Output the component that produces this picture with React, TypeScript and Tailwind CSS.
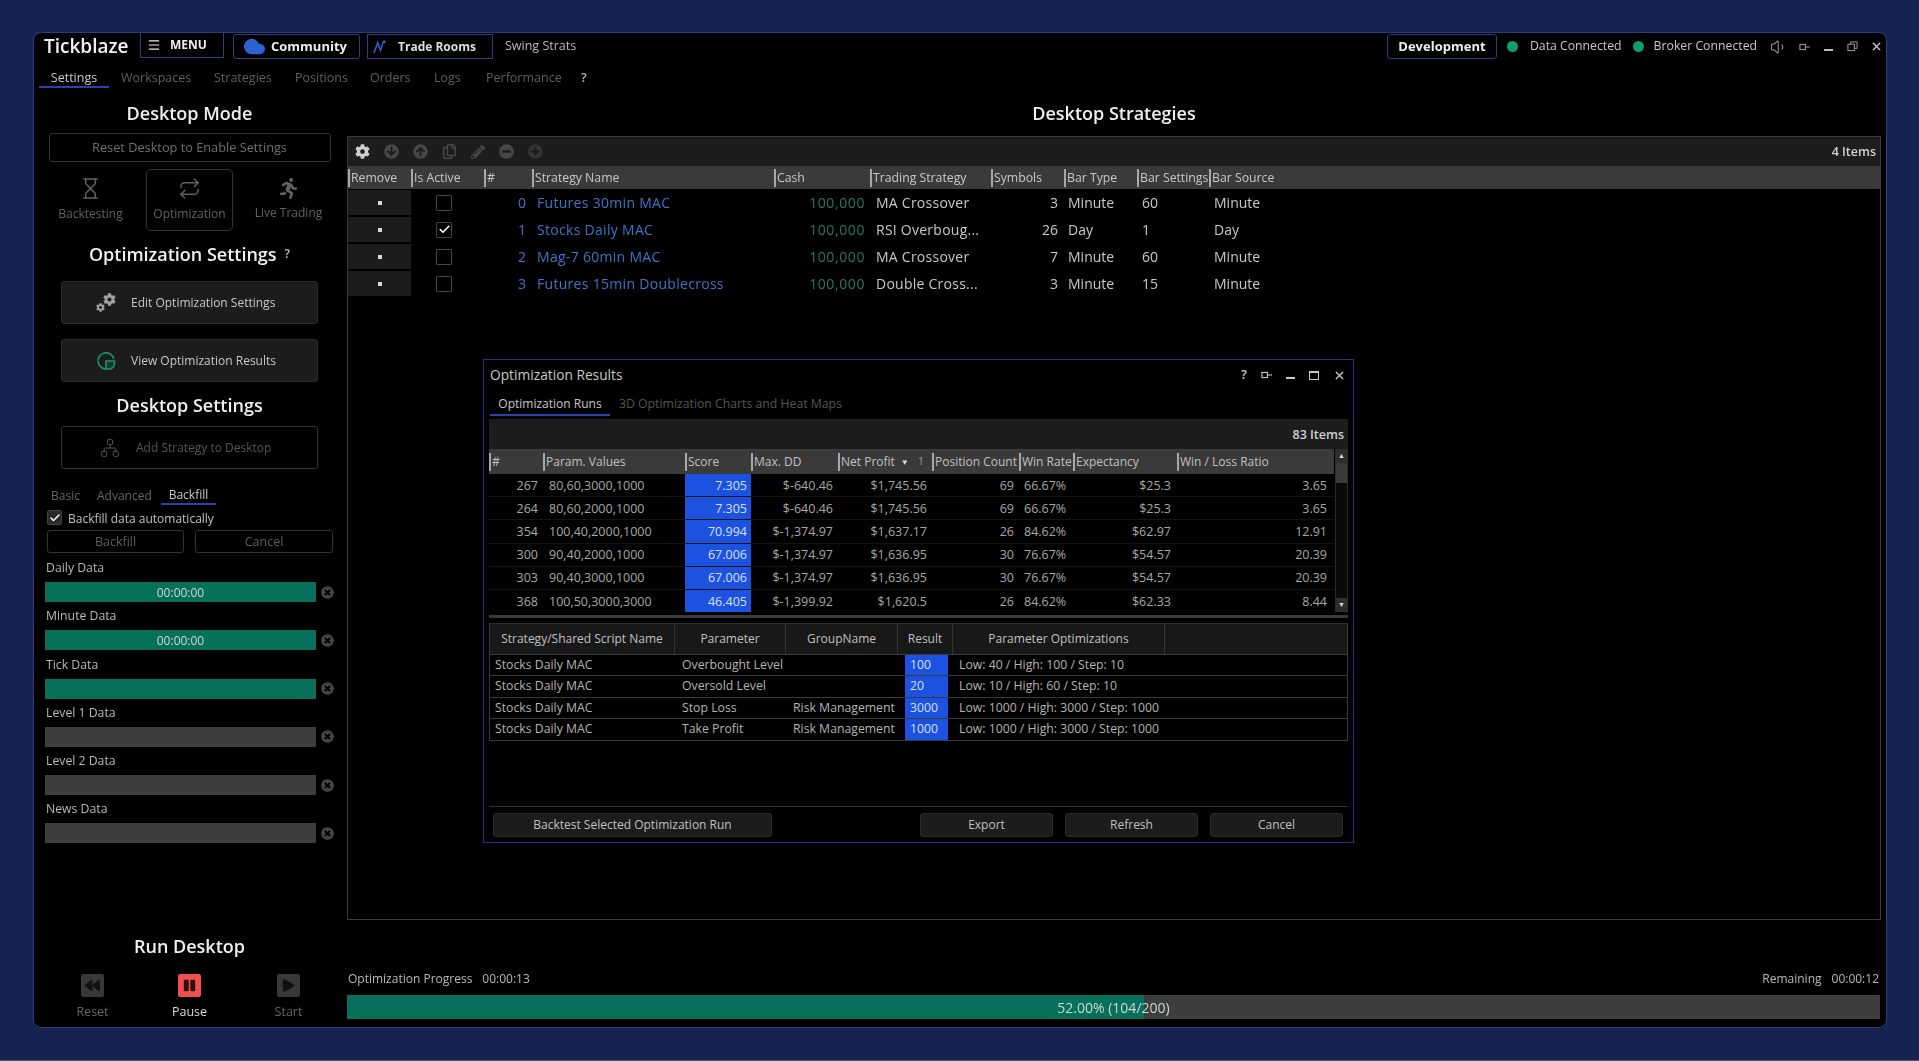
import { ReactNode } from "react";
import { Check, Cloud, Hourglass, Menu, Network, Repeat, Volume1, X } from "lucide-react";
import {
  FaArrowCircleDown,
  FaArrowCircleUp,
  FaBackward,
  FaCog,
  FaMinusCircle,
  FaPause,
  FaPencilAlt,
  FaPlay,
  FaPlusCircle,
  FaRegCopy,
  FaRunning,
  FaTimesCircle,
} from "react-icons/fa";

const strategies = [
  { id: 0, name: "Futures 30min MAC", strategy: "MA Crossover", symbols: 3, type: "Minute", settings: 60, source: "Minute", active: false },
  { id: 1, name: "Stocks Daily MAC", strategy: "RSI Overboug...", symbols: 26, type: "Day", settings: 1, source: "Day", active: true },
  { id: 2, name: "Mag-7 60min MAC", strategy: "MA Crossover", symbols: 7, type: "Minute", settings: 60, source: "Minute", active: false },
  { id: 3, name: "Futures 15min Doublecross", strategy: "Double Cross...", symbols: 3, type: "Minute", settings: 15, source: "Minute", active: false },
];

const runs = [
  ["267", "80,60,3000,1000", "7.305", "$-640.46", "$1,745.56", "69", "66.67%", "$25.3", "3.65"],
  ["264", "80,60,2000,1000", "7.305", "$-640.46", "$1,745.56", "69", "66.67%", "$25.3", "3.65"],
  ["354", "100,40,2000,1000", "70.994", "$-1,374.97", "$1,637.17", "26", "84.62%", "$62.97", "12.91"],
  ["300", "90,40,2000,1000", "67.006", "$-1,374.97", "$1,636.95", "30", "76.67%", "$54.57", "20.39"],
  ["303", "90,40,3000,1000", "67.006", "$-1,374.97", "$1,636.95", "30", "76.67%", "$54.57", "20.39"],
  ["368", "100,50,3000,3000", "46.405", "$-1,399.92", "$1,620.5", "26", "84.62%", "$62.33", "8.44"],
];

const params = [
  ["Overbought Level", "", "100", "Low: 40 / High: 100 / Step: 10"],
  ["Oversold Level", "", "20", "Low: 10 / High: 60 / Step: 10"],
  ["Stop Loss", "Risk Management", "3000", "Low: 1000 / High: 3000 / Step: 1000"],
  ["Take Profit", "Risk Management", "1000", "Low: 1000 / High: 3000 / Step: 1000"],
];

const backfills = [
  { label: "Daily Data", done: true, time: "00:00:00" },
  { label: "Minute Data", done: true, time: "00:00:00" },
  { label: "Tick Data", done: true, time: "" },
  { label: "Level 1 Data", done: false, time: "" },
  { label: "Level 2 Data", done: false, time: "" },
  { label: "News Data", done: false, time: "" },
];

const HeadCell = ({ children }: { children?: ReactNode }) => (
  <div className="flex items-center h-[18px] border-l-2 border-[#a8a8a8] pl-[1px] whitespace-nowrap overflow-hidden">
    {children}
  </div>
);

const PinIcon = ({ className }: { className: string }) => (
  <svg viewBox="0 0 12 8" className={className} fill="none" stroke="currentColor" strokeWidth="1.2">
    <rect x="1" y="1.2" width="6" height="5.6" />
    <path d="M7 4h5" />
  </svg>
);

const Heading = ({ children, className }: { children: ReactNode; className: string }) => (
  <div className={`text-center text-[18px] leading-[20px] font-semibold text-[#f0f0f0] ${className}`}>{children}</div>
);

const Sidebar = () => (
  <div className="flex flex-col w-[311px] shrink-0">
    <Heading className="mt-[11px]">Desktop Mode</Heading>
    <div className="mx-auto mt-[10px] pt-[1px] w-[282px] h-[29px] flex items-center justify-center border border-[#333] rounded-[3px] text-[12.75px] text-[#6f6f6f]">
      Reset Desktop to Enable Settings
    </div>
    <div className="mt-[7px] flex justify-center gap-[12px] h-[62px] text-[12px] text-[#626262]">
      <div className="w-[87px] flex flex-col items-center justify-center gap-[5px]">
        <Hourglass size={23} strokeWidth={1.5} />
        <span>Backtesting</span>
      </div>
      <div className="w-[87px] flex flex-col items-center justify-center gap-[5px] border border-[#333] rounded-[5px]">
        <Repeat size={23} strokeWidth={1.5} />
        <span>Optimization</span>
      </div>
      <div className="w-[87px] flex flex-col items-center justify-center gap-[5px] whitespace-nowrap">
        <FaRunning size={21} />
        <span>Live Trading</span>
      </div>
    </div>
    <div className="mt-[13px] mb-[1px] flex justify-center items-center gap-[8px]">
      <span className="text-[18px] leading-[20px] font-semibold text-[#f0f0f0]">Optimization Settings</span>
      <span className="text-[12px] text-[#bbb] font-semibold">?</span>
    </div>
    <div className="mx-auto mt-[16px] pt-[1px] w-[257px] h-[43px] flex items-center pl-[34px] gap-[15px] bg-[#1c1c1c] border border-[#2b2b2b] rounded-[3px] text-[12px] text-[#c8c8c8]">
      <div className="relative w-[20px] h-[20px] text-[#a0a0a0]">
        <FaCog size={13} className="absolute right-0 top-0" />
        <FaCog size={9} className="absolute left-0 bottom-[1px]" />
      </div>
      <span>Edit Optimization Settings</span>
    </div>
    <div className="mx-auto mt-[15px] pt-[1px] w-[257px] h-[43px] flex items-center pl-[34px] gap-[15px] bg-[#1c1c1c] border border-[#2b2b2b] rounded-[3px] text-[12px] text-[#c8c8c8]">
      <svg viewBox="0 0 20 20" className="w-[20px] h-[20px] text-[#1f8f69]" fill="none" stroke="currentColor" strokeWidth="1.6">
        <path d="M12 17.6A8 8 0 1 1 17.8 8" />
        <path d="M10 10h8.500v2.500a5.500 5.500 0 0 1-5.500 5.500h-3z" fill="#0e3b2d" />
      </svg>
      <span>View Optimization Results</span>
    </div>
    <Heading className="mt-[13px]">Desktop Settings</Heading>
    <div className="mx-auto mt-[11px] pt-[1px] w-[257px] h-[43px] flex items-center pl-[38px] gap-[16px] border border-[#333] rounded-[3px] text-[12px] text-[#555]">
      <Network size={20} strokeWidth={1.2} />
      <span>Add Strategy to Desktop</span>
    </div>
    <div className="mt-[18px] ml-[17px] flex h-[18px] text-[12px] text-[#666]">
      <span className="w-[46px]">Basic</span>
      <span className="w-[64px] whitespace-nowrap">Advanced</span>
      <span className="w-[55px] text-center text-[#c8c8c8] border-b-2 border-[#2a3fb0] h-[18px] leading-[15px]">Backfill</span>
    </div>
    <div className="mt-[5px] ml-[13px] flex items-center gap-[6px] h-[15px] text-[12px] text-[#c0c0c0]">
      <div className="w-[15px] h-[15px] flex items-center justify-center bg-[#2a2a2a] border border-[#444] rounded-[2px] text-white">
        <Check size={12} strokeWidth={3} />
      </div>
      <span className="pt-[2px]">Backfill data automatically</span>
    </div>
    <div className="mt-[5px] ml-[13px] flex gap-[11px] text-[12.5px] text-[#5f5f5f]">
      <div className="w-[137px] h-[23px] pt-[2px] flex items-center justify-center border border-[#333] rounded-[3px]">Backfill</div>
      <div className="w-[138px] h-[23px] pt-[2px] flex items-center justify-center border border-[#333] rounded-[3px]">Cancel</div>
    </div>
    <div className="mt-[4px] flex flex-col gap-[3.3px]">
      {backfills.map((b) => (
        <div key={b.label}>
          <div className="ml-[12px] h-[20px] leading-[22px] text-[12.25px] text-[#b8b8b8]">{b.label}</div>
          <div className="mt-[5px] ml-[11px] flex items-center">
            <div className={`w-[271px] h-[20px] pt-[1px] flex items-center justify-center text-[12px] text-[#c9d8d2] ${b.done ? "bg-[#08705a]" : "bg-[#3d3d3d]"}`}>
              {b.time}
            </div>
            <FaTimesCircle size={13} className="ml-[5px] text-[#444]" />
          </div>
        </div>
      ))}
    </div>
    <div className="mt-auto">
      <Heading className="">Run Desktop</Heading>
      <div className="mt-[18px] mb-[5px] flex justify-center gap-[12px] text-[12.5px]">
        <div className="w-[87px] pl-[4px] flex flex-col items-center gap-[6px] text-[#666]">
          <div className="w-[23px] h-[23px] flex items-center justify-center bg-[#383838] rounded-[2px] text-[#111]"><FaBackward size={15} /></div>
          <span>Reset</span>
        </div>
        <div className="w-[87px] flex flex-col items-center gap-[6px] text-[#d8d8d8]">
          <div className="w-[23px] h-[23px] flex items-center justify-center bg-[#f04f4f] rounded-[2px] text-[#2a0d0d]"><FaPause size={13} /></div>
          <span>Pause</span>
        </div>
        <div className="w-[87px] flex flex-col items-center gap-[6px] text-[#666]">
          <div className="w-[23px] h-[23px] flex items-center justify-center bg-[#383838] rounded-[2px] text-[#111]"><FaPlay size={13} /></div>
          <span>Start</span>
        </div>
      </div>
    </div>
  </div>
);

const StrategiesTable = () => (
  <>
    <div className="h-[29px] flex items-center justify-between bg-[#1d1d1d] pl-[7px] pr-[4px]">
      <div className="flex items-center gap-[14px] text-[#474747]">
        <FaCog size={15} className="text-[#cfcfcf]" />
        <FaArrowCircleDown size={15} />
        <FaArrowCircleUp size={15} />
        <FaRegCopy size={15} />
        <FaPencilAlt size={14} />
        <FaMinusCircle size={15} />
        <FaPlusCircle size={15} className="text-[#333]" />
      </div>
      <span className="pt-[1px] text-[12.5px] font-semibold text-[#d0d0d0]">4 Items</span>
    </div>
    <div className="h-[23px] pt-[1px] grid grid-cols-[63px_73px_48px_242px_96px_121px_73px_73px_72px_1fr] items-center bg-[#3a3a3a] text-[12.25px] text-[#c8c8c8]">
      {["Remove", "Is Active", "#", "Strategy Name", "Cash", "Trading Strategy", "Symbols", "Bar Type", "Bar Settings", "Bar Source"].map((h) => (
        <HeadCell key={h}>{h}</HeadCell>
      ))}
    </div>
    {strategies.map((s) => (
      <div key={s.id} className="h-[27px] grid grid-cols-[63px_73px_48px_242px_96px_121px_73px_73px_72px_1fr] items-center text-[14px]">
        <div className="h-[25px] flex items-center justify-center bg-[#1c1c1c]">
          <div className="w-[4px] h-[4px] bg-[#d8d8d8]" />
        </div>
        <div className="flex justify-center pr-[7px]">
          <div className="w-[16px] h-[16px] flex items-center justify-center border border-[#444] rounded-[1px] text-white">
            {s.active ? <Check size={13} strokeWidth={3} /> : null}
          </div>
        </div>
        <div className="text-right pr-[6px] text-[#3b76c4]">{s.id}</div>
        <div className="pl-[5px] text-[#3b76c4] tracking-[0.3px]">{s.name}</div>
        <div className="text-right pr-[5px] text-[#25795a] tracking-[0.6px]">100,000</div>
        <div className="pl-[6px] text-[#c8c8c8] tracking-[0.25px] whitespace-nowrap">{s.strategy}</div>
        <div className="text-right pr-[6px] text-[#c8c8c8]">{s.symbols}</div>
        <div className="pl-[4px] text-[#c8c8c8]">{s.type}</div>
        <div className="pl-[5px] text-[#c8c8c8]">{s.settings}</div>
        <div className="pl-[5px] text-[#c8c8c8]">{s.source}</div>
      </div>
    ))}
  </>
);

const RunsGrid = () => (
  <div>
    <div className="h-[30px] pt-[2px] flex items-center justify-end pr-[4px] bg-[#1d1d1d] text-[12.5px] font-semibold text-[#d0d0d0]">83 Items</div>
    <div className="flex">
      <div className="w-[846px]">
        <div className="h-[25px] grid grid-cols-[54px_142px_66px_87px_94px_87px_54px_104px_155px] items-center bg-[#3a3a3a] text-[12px] text-[#c0c0c0]">
          <HeadCell>#</HeadCell>
          <HeadCell>Param. Values</HeadCell>
          <HeadCell>Score</HeadCell>
          <HeadCell>Max. DD</HeadCell>
          <HeadCell>
            Net Profit
            <span className="ml-[6px] text-[8px] text-[#ddd]">▼</span>
            <span className="ml-[9px] text-[11px] text-[#999]">1</span>
          </HeadCell>
          <HeadCell>Position Count</HeadCell>
          <HeadCell>Win Rate</HeadCell>
          <HeadCell>Expectancy</HeadCell>
          <HeadCell>Win / Loss Ratio</HeadCell>
        </div>
        <div className="h-[138px] overflow-hidden">
          {runs.map((r, i) => (
            <div key={i} className="h-[23.2px] grid grid-cols-[54px_142px_66px_87px_94px_87px_54px_104px_155px] items-center text-[12.5px] text-[#a8a8a8] border-b border-[#141414] [&>div]:pt-[2px]">
              <div className="text-right pr-[5px]">{r[0]}</div>
              <div className="pl-[6px]">{r[1]}</div>
              <div className="h-full flex items-center justify-end pr-[4px] bg-[#1d51e0] text-[#d5e0ff]">{r[2]}</div>
              <div className="text-right pr-[5px]">{r[3]}</div>
              <div className="text-right pr-[5px]">{r[4]}</div>
              <div className="text-right pr-[5px]">{r[5]}</div>
              <div className="pl-[5px]">{r[6]}</div>
              <div className="text-right pr-[6px]">{r[7]}</div>
              <div className="text-right pr-[5px]">{r[8]}</div>
            </div>
          ))}
        </div>
      </div>
      <div className="ml-[1px] w-[13px] flex flex-col bg-[#0a0a0a] border-x border-[#2c2c2c]">
        <div className="h-[14px] flex items-center justify-center bg-[#2e2e2e] text-[7px] text-[#ddd]">▲</div>
        <div className="h-[20px] bg-[#3a3a3a]" />
        <div className="mt-auto h-[14px] flex items-center justify-center bg-[#2e2e2e] text-[7px] text-[#ddd]">▼</div>
      </div>
    </div>
  </div>
);

const ParamsGrid = () => (
  <div className="mt-[5px] border-x border-b border-[#3a3a3a] text-[12.25px] text-[#b4b4b4]">
    <div className="h-[31px] grid grid-cols-[185px_111px_112px_55px_212px_1fr] bg-[#181818] text-[12px] text-[#c0c0c0] border-t border-[#2c2c2c]">
      {["Strategy/Shared Script Name", "Parameter", "GroupName", "Result", "Parameter Optimizations", ""].map((h, i) => (
        <div key={i} className={`flex items-center justify-center whitespace-nowrap ${i < 5 ? "border-r border-[#333]" : ""}`}>
          {h}
        </div>
      ))}
    </div>
    {params.map((p) => (
      <div key={p[0]} className="h-[21.4px] grid grid-cols-[192px_111px_112px_43px_1fr] items-center border-t border-[#3a3a3a] bg-black">
        <div className="pl-[5px]">Stocks Daily MAC</div>
        <div className="whitespace-nowrap">{p[0]}</div>
        <div className="whitespace-nowrap">{p[1]}</div>
        <div className="h-full flex items-center pl-[5px] bg-[#1d51e0] text-[#d5e0ff]">{p[2]}</div>
        <div className="pl-[11px]">{p[3]}</div>
      </div>
    ))}
  </div>
);

const OptimizationResults = () => (
  <div className="absolute left-[135px] top-[222px] w-[871px] h-[484px] flex flex-col bg-black border border-[#27308f]">
    <div className="h-[30px] flex items-center justify-between pl-[6px] pr-[7px]">
      <span className="text-[13.75px] text-[#c8c8c8]">Optimization Results</span>
      <div className="flex items-center gap-[14px] text-[#c8c8c8]">
        <span className="text-[13px] font-semibold">?</span>
        <PinIcon className="w-[11px] h-[8px]" />
        <div className="mt-[6px] w-[9px] h-[2px] bg-[#c8c8c8]" />
        <div className="w-[10px] h-[9px] border border-[#c8c8c8] border-t-2" />
        <X size={13} strokeWidth={2.5} />
      </div>
    </div>
    <div className="flex items-end h-[26px] text-[12px]">
      <span className="ml-[6px] w-[120px] h-[24px] text-center text-[#c8c8c8] border-b-2 border-[#2a3fb0] leading-[24px]">Optimization Runs</span>
      <span className="ml-[9px] h-[24px] text-[12.25px] text-[#555] leading-[24px]">3D Optimization Charts and Heat Maps</span>
    </div>
    <div className="mt-[3px] mx-[5px] flex-1 flex flex-col">
      <RunsGrid />
      <div className="mt-[3px] h-[3px] bg-[#3a3a3a]" />
      <ParamsGrid />
    </div>
    <div className="mx-[5px] border-t border-[#333] h-[36px] flex items-center pl-[4px] pr-[5px] text-[12px] text-[#c0c0c0]">
      <div className="w-[279px] h-[24px] flex items-center justify-center bg-[#1c1c1c] border border-[#2b2b2b] rounded-[3px]">Backtest Selected Optimization Run</div>
      <div className="ml-auto w-[133px] h-[24px] flex items-center justify-center bg-[#1c1c1c] border border-[#2b2b2b] rounded-[3px]">Export</div>
      <div className="ml-[12px] w-[133px] h-[24px] flex items-center justify-center bg-[#1c1c1c] border border-[#2b2b2b] rounded-[3px]">Refresh</div>
      <div className="ml-[12px] w-[133px] h-[24px] flex items-center justify-center bg-[#1c1c1c] border border-[#2b2b2b] rounded-[3px]">Cancel</div>
    </div>
  </div>
);

export default function App() {
  return (
    <div className="h-[1061px] overflow-hidden bg-[#172452] border-b border-[#4a5a80] pt-[32px] pl-[33px] font-['Open_Sans',sans-serif]">
      <div className="w-[1854px] h-[996px] flex flex-col bg-black border border-[#2b3c80] rounded-lg overflow-hidden blur-[0.3px]">
        {/* title bar */}
        <div className="h-[29px] flex shrink-0 items-start pr-[3px] text-[#c8c8c8]">
          <span className="ml-[10px] w-[96px] text-[19px] leading-[26px] font-semibold text-[#f2f2f2]">Tickblaze</span>
          <div className="w-[84px] h-[25px] flex items-center pl-[6px] gap-[9px] border-x border-b border-[#2c3f86] text-[12px] font-bold text-[#eee]">
            <Menu size={14} />
            MENU
          </div>
          <div className="ml-[9px] mt-[1px] w-[127px] h-[25px] flex items-center pl-[9px] gap-[5px] border border-[#2c3f86] rounded-[3px] text-[13px] font-bold text-[#eee]">
            <Cloud size={23} fill="#2f62d0" className="text-[#2f62d0]" />
            Community
          </div>
          <div className="ml-[7px] mt-[1px] w-[126px] h-[25px] flex items-center pl-[5px] gap-[10px] border border-[#2c3f86] text-[12px] font-bold text-[#ddd]">
            <svg viewBox="0 0 16 16" className="w-[15px] h-[15px]" fill="none" strokeWidth="1.6">
              <path d="M1 15 5 4l3 8 3-9" stroke="#2f62d0" />
              <circle cx="12" cy="3" r="1.5" fill="#2f62d0" />
            </svg>
            Trade Rooms
          </div>
          <span className="ml-[12px] mt-[4px] text-[12.5px] text-[#bbb]">Swing Strats</span>

          <div className="ml-auto mt-[1px] w-[110px] h-[25px] flex items-center justify-center border border-[#2c3f86] rounded-[3px] text-[13px] font-bold text-[#eee]">
            Development
          </div>
          <div className="ml-[10px] mt-[8px] w-[11px] h-[11px] rounded-full bg-[#0b9e6e]" />
          <span className="ml-[12px] mt-[4px] text-[12.25px]">Data Connected</span>
          <div className="ml-[11px] mt-[8px] w-[11px] h-[11px] rounded-full bg-[#0b9e6e]" />
          <span className="ml-[10px] mt-[4px] text-[12.25px]">Broker Connected</span>
          <Volume1 size={18} strokeWidth={1.4} className="ml-[13px] mt-[5px] text-[#999]" />
          <PinIcon className="ml-[11px] mt-[10px] w-[11px] h-[8px] text-[#999]" />
          <div className="ml-[14px] mt-[16px] w-[9px] h-[2px] bg-[#bbb]" />
          <svg viewBox="0 0 12 12" className="ml-[14px] mt-[8px] w-[11px] h-[11px] text-[#aaa]" fill="none" stroke="currentColor">
            <rect x="1" y="3.5" width="7" height="7" />
            <path d="M4 3.5V1h7v7H8" />
          </svg>
          <X size={13} strokeWidth={2.5} className="ml-[12px] mt-[7px]" />
        </div>

        {/* tabs */}
        <div className="h-[30px] flex shrink-0 text-[12.5px] text-[#5f5f5f]">
          <span className="ml-[5px] w-[70px] h-[26px] text-center leading-[32px] text-[#c8c8c8] border-b-2 border-[#2a3fb0]">Settings</span>
          <span className="ml-[12px] w-[93px] leading-[32px]">Workspaces</span>
          <span className="w-[81px] leading-[32px]">Strategies</span>
          <span className="w-[75px] leading-[32px]">Positions</span>
          <span className="w-[64px] leading-[32px]">Orders</span>
          <span className="w-[52px] leading-[32px]">Logs</span>
          <span className="w-[95px] leading-[32px]">Performance</span>
          <span className="leading-[32px] font-semibold text-[#bbb]">?</span>
        </div>

        <div className="flex-1 flex min-h-0">
          <Sidebar />
          <div className="ml-[2px] w-[1534px] flex flex-col">
            <Heading className="mt-[11px]">Desktop Strategies</Heading>
            <div className="mt-[13px] h-[784px] relative border border-[#3a3a3a]">
              <StrategiesTable />
              <OptimizationResults />
            </div>
            <div className="mt-[50px] flex justify-between text-[12px] text-[#b8b8b8] leading-[18px]">
              <span className="pl-[1px]">
                Optimization Progress<span className="ml-[10px]">00:00:13</span>
              </span>
              <span className="pr-[2px]">
                Remaining<span className="ml-[10px]">00:00:12</span>
              </span>
            </div>
            <div className="mt-[7px] h-[24px] mr-[1px] flex items-center justify-center relative bg-[#3d3d3d] overflow-hidden">
              <div className="absolute inset-y-0 left-0 w-[52%] bg-[#08705a]" />
              <span className="relative text-[14px] text-[#c9d8d2]">52.00% (104/200)</span>
            </div>
          </div>
        </div>
      </div>
    </div>
  );
}
